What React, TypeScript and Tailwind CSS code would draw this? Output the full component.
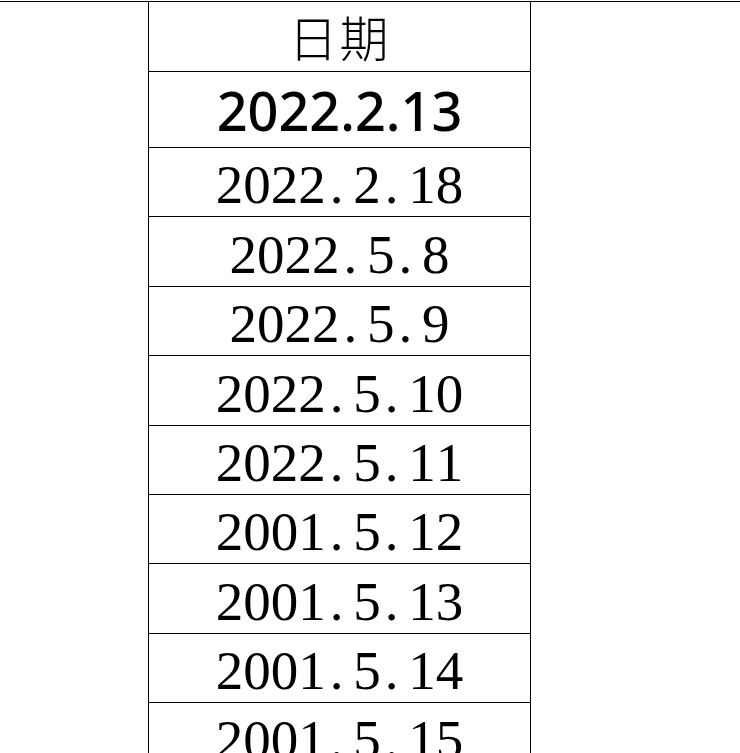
const ROWS: { text: string; h: string }[] = [
  { text: "2022.2.18", h: "h-[69px]" },
  { text: "2022.5.8", h: "h-[70px]" },
  { text: "2022.5.9", h: "h-[69px]" },
  { text: "2022.5.10", h: "h-[70px]" },
  { text: "2022.5.11", h: "h-[69px]" },
  { text: "2001.5.12", h: "h-[69px]" },
  { text: "2001.5.13", h: "h-[70px]" },
  { text: "2001.5.14", h: "h-[69px]" },
  { text: "2001.5.15", h: "h-[69px]" },
];

// half-width cells, like SimSun renders ascii; the dot sits at the left of its cell
function SongDigits({ text }: { text: string }) {
  return (
    <span className="inline-flex">
      {text.split("").map((c, i) => (
        <span
          key={i}
          className={`inline-block w-[0.5em] ${c === "." ? "pl-[4px] text-left" : "text-center"}`}
        >
          {c}
        </span>
      ))}
    </span>
  );
}

export default function App() {
  return (
    <div className="h-[753px] w-[740px] overflow-hidden bg-white pt-px text-black">
      <div className="border-t border-black">
        <div className="ml-[148px] w-[383px] border-x border-black">
          <div className="flex h-[70px] items-center justify-center border-b border-black pb-[3px] font-['Noto_Sans_CJK_SC',sans-serif] text-[49px] font-light leading-none tracking-[2px]">
            日期
          </div>
          <div className="flex h-[76px] items-center justify-center border-b border-black pt-[1px] font-['Noto_Sans','Noto_Sans_CJK_SC',sans-serif] text-[54px] font-medium leading-none">
            2022.2.13
          </div>
          {ROWS.map((r) => (
            <div
              key={r.text}
              className={`flex ${r.h} items-center justify-center border-b border-black pt-[5px] font-['Liberation_Serif',serif] text-[55px] leading-none`}
            >
              <SongDigits text={r.text} />
            </div>
          ))}
        </div>
      </div>
    </div>
  );
}
